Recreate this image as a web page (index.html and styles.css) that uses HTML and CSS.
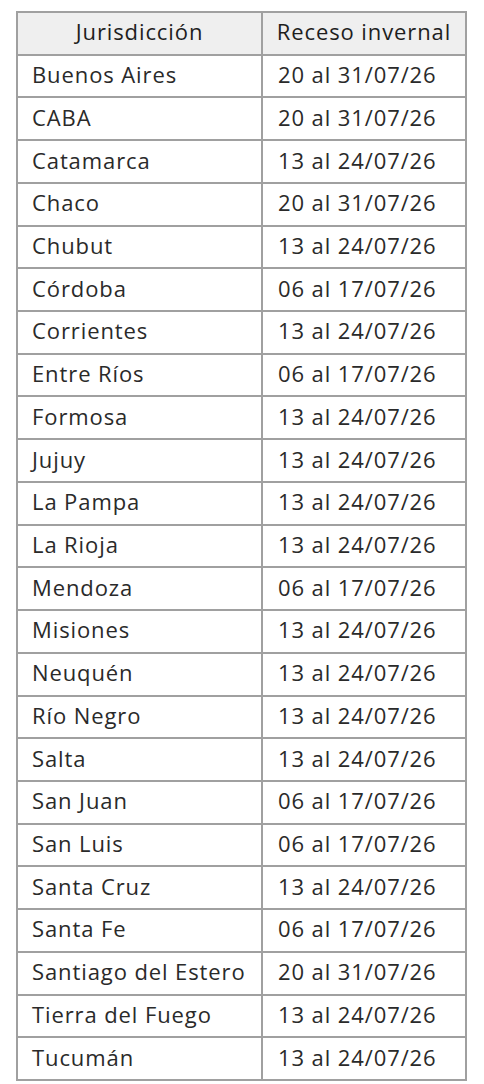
FILE: index.html
```html
<!DOCTYPE html>
<html lang="es">
<head>
<meta charset="utf-8">
<title>Receso invernal</title>
<link rel="stylesheet" href="styles.css">
</head>
<body>
<table class="receso">
  <colgroup>
    <col class="col-j">
    <col class="col-r">
  </colgroup>
  <thead>
    <tr><th>Jurisdicción</th><th>Receso invernal</th></tr>
  </thead>
  <tbody>
    <tr><td>Buenos Aires</td><td>20 al 31/07/26</td></tr>
    <tr><td>CABA</td><td>20 al 31/07/26</td></tr>
    <tr><td>Catamarca</td><td>13 al 24/07/26</td></tr>
    <tr><td>Chaco</td><td>20 al 31/07/26</td></tr>
    <tr><td>Chubut</td><td>13 al 24/07/26</td></tr>
    <tr><td>Córdoba</td><td>06 al 17/07/26</td></tr>
    <tr><td>Corrientes</td><td>13 al 24/07/26</td></tr>
    <tr><td>Entre Ríos</td><td>06 al 17/07/26</td></tr>
    <tr><td>Formosa</td><td>13 al 24/07/26</td></tr>
    <tr><td>Jujuy</td><td>13 al 24/07/26</td></tr>
    <tr><td>La Pampa</td><td>13 al 24/07/26</td></tr>
    <tr><td>La Rioja</td><td>13 al 24/07/26</td></tr>
    <tr><td>Mendoza</td><td>06 al 17/07/26</td></tr>
    <tr><td>Misiones</td><td>13 al 24/07/26</td></tr>
    <tr><td>Neuquén</td><td>13 al 24/07/26</td></tr>
    <tr><td>Río Negro</td><td>13 al 24/07/26</td></tr>
    <tr><td>Salta</td><td>13 al 24/07/26</td></tr>
    <tr><td>San Juan</td><td>06 al 17/07/26</td></tr>
    <tr><td>San Luis</td><td>06 al 17/07/26</td></tr>
    <tr><td>Santa Cruz</td><td>13 al 24/07/26</td></tr>
    <tr><td>Santa Fe</td><td>06 al 17/07/26</td></tr>
    <tr><td>Santiago del Estero</td><td>20 al 31/07/26</td></tr>
    <tr><td>Tierra del Fuego</td><td>13 al 24/07/26</td></tr>
    <tr><td>Tucumán</td><td>13 al 24/07/26</td></tr>
  </tbody>
</table>
</body>
</html>
```
FILE: styles.css
```css
html, body {
  margin: 0;
  padding: 0;
  background: #ffffff;
}
body {
  padding: 11px 0 0 16px;
  font-family: "Open Sans", "Noto Sans", sans-serif;
  color: #2a2a2a;
}
.receso {
  border-collapse: collapse;
  width: 449px;
  table-layout: fixed;
  font-size: 22px;
  letter-spacing: 0.9px;
}
.col-j { width: 245px; }
.col-r { width: 204px; }
.receso th,
.receso td {
  box-sizing: border-box;
  height: 42.72px;
  border: 2px solid #a0a0a0;
  padding: 0 0 4px 14px;
  text-align: left;
  vertical-align: middle;
  white-space: nowrap;
  line-height: 1;
}
.receso th {
  background: #efefef;
  font-weight: 500;
  color: #1e1e1e;
  text-align: center;
  padding: 0 0 4px 0;
}
.receso td + td { padding-left: 15px; }
```
